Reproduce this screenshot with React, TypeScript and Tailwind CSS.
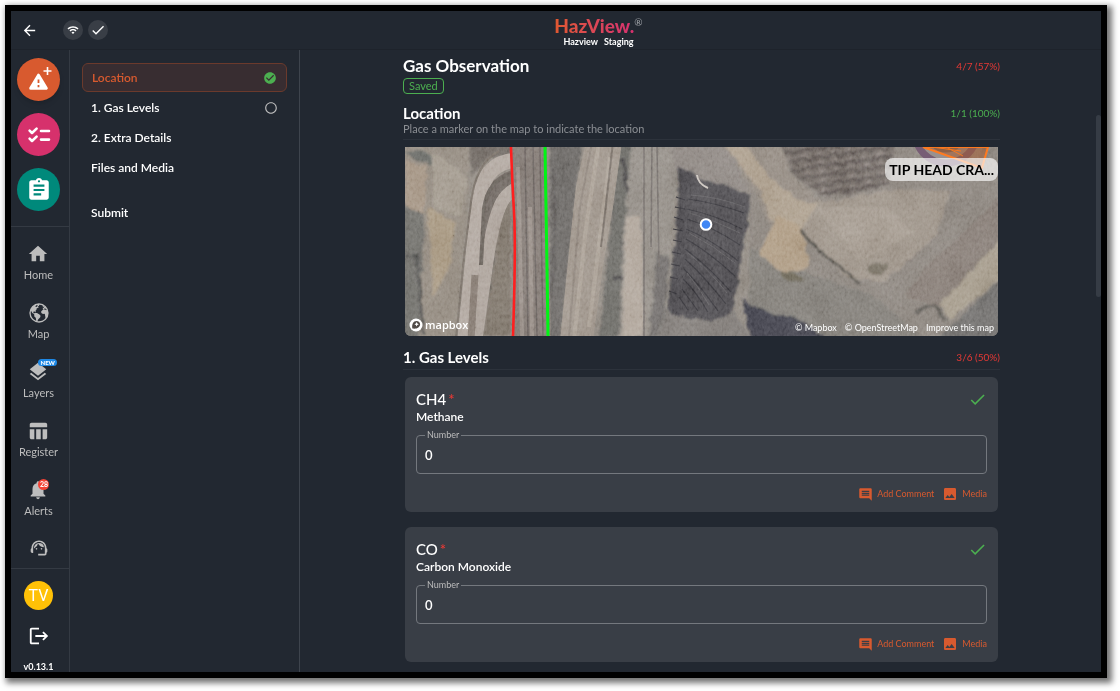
import React from 'react';
import { IoEarth } from 'react-icons/io5';
import {
  MdArrowBack,
  MdAssignment,
  MdCheck,
  MdCheckCircle,
  MdComment,
  MdHome,
  MdImage,
  MdLayers,
  MdLogout,
  MdNotifications,
  MdRadioButtonUnchecked,
  MdSupportAgent,
  MdTableChart,
  MdWifi,
} from 'react-icons/md';

const navItems = [
  { label: 'Home', icon: MdHome },
  { label: 'Map', icon: IoEarth },
  { label: 'Layers', icon: MdLayers, badge: 'NEW' },
  { label: 'Register', icon: MdTableChart },
  { label: 'Alerts', icon: MdNotifications, count: 28 },
];

const gases = [
  { id: 'ch4', symbol: 'CH4', name: 'Methane' },
  { id: 'co', symbol: 'CO', name: 'Carbon Monoxide' },
];

const HazardIcon: React.FC = () => (
  <svg viewBox="0 0 28 28" className="h-7 w-7" fill="none">
    <path d="M13.500 9.200 21.300 22.300H5.700Z" fill="white" stroke="white" strokeWidth="3" strokeLinejoin="round" />
    <path d="M13.500 13.500v3.500M13.500 19v2.200" stroke="#d85a2f" strokeWidth="1.800" />
    <path d="M22.500 1v8M18.500 5h8" stroke="white" strokeWidth="1.600" />
  </svg>
);

const ChecksIcon: React.FC = () => (
  <svg viewBox="0 0 28 28" className="h-7 w-7" fill="none" stroke="white" strokeWidth="2.600" strokeLinecap="round" strokeLinejoin="round">
    <path d="m4.600 9.600 2.400 2.400L11.600 7.600M4.600 17.600l2.400 2.400 4.600-4.400" />
    <path d="M16 10h8M16 18.600h8" />
  </svg>
);

const Header: React.FC = () => (
  <header className="flex h-[39px] items-center border-b border-[#1e232b]">
    <div className="flex w-[100px] shrink-0 items-center gap-[5px] pl-2.5">
      <button aria-label="Back" className="mr-5 text-white">
        <MdArrowBack className="h-[17px] w-[17px]" />
      </button>
      <span className="flex h-5 w-5 shrink-0 items-center justify-center rounded-full bg-[#393e46] text-white">
        <MdWifi className="h-3 w-3" />
      </span>
      <span className="flex h-5 w-5 shrink-0 items-center justify-center rounded-full bg-[#393e46] text-white">
        <MdCheck className="h-4 w-4" />
      </span>
    </div>
    <div className="flex flex-1 flex-col items-center pt-1 pr-[15px]">
      <div className="flex items-start">
        <span className="bg-gradient-to-r from-[#e0582f] to-[#d6306f] bg-clip-text text-[19px] leading-5 font-black text-transparent">HazView.</span>
        <span className="text-[10px] leading-3 text-[#a0a3a8]">®</span>
      </div>
      <span className="flex gap-1.5 text-[9px] leading-3 font-bold text-white">
        <span>Hazview</span>
        <span>Staging</span>
      </span>
    </div>
  </header>
);

const Sidebar: React.FC = () => (
  <aside className="flex w-[59px] shrink-0 flex-col border-r border-[#343a43]">
    <div className="flex flex-col items-center gap-3 border-b border-[#343a43] pt-2 pr-[3px] pb-[15px]">
      <button aria-label="New hazard" className="flex h-[43px] w-[43px] items-center justify-center rounded-full bg-[#d85a2f] shadow-md">
        <HazardIcon />
      </button>
      <button aria-label="Tasks" className="flex h-[43px] w-[43px] items-center justify-center rounded-full bg-[#d6316c]">
        <ChecksIcon />
      </button>
      <button aria-label="Forms" className="flex h-[43px] w-[43px] items-center justify-center rounded-full bg-[#00897b] text-white">
        <MdAssignment className="h-[26px] w-[26px]" />
      </button>
    </div>
    <nav className="flex flex-col items-center pt-4 pr-[3px]">
      {navItems.map(({ label, icon: Icon, badge, count }) => (
        <a key={label} href="#" className="relative flex h-[59px] flex-col items-center gap-1 text-[#bdbdbd]">
          <Icon className="h-[22px] w-[22px]" />
          <span className="text-[11px] leading-3">{label}</span>
          {badge && (
            <span className="absolute top-[-2px] left-1/2 rounded-full bg-[#1e88e5] px-0.5 text-[6px] leading-[7px] font-black text-white">{badge}</span>
          )}
          {count && (
            <span className="absolute top-0 left-1/2 flex h-[11px] w-[11px] items-center justify-center rounded-full bg-[#f44336] text-[7px] font-bold text-white">{count}</span>
          )}
        </a>
      ))}
      <a href="#" aria-label="Support" className="text-[#bdbdbd]">
        <MdSupportAgent className="h-5 w-5" />
      </a>
    </nav>
    <div className="mt-auto flex flex-col items-center border-t border-[#343a43] pt-3 pr-[3px]">
      <span className="flex h-[29px] w-[29px] items-center justify-center rounded-full bg-[#ffc107] font-['Roboto',sans-serif] text-base text-white">TV</span>
      <button aria-label="Log out" className="mt-[15px] text-white">
        <MdLogout className="h-[22px] w-[22px]" />
      </button>
      <span className="mt-3.5 text-[9px] leading-[11px] font-bold text-white">v0.13.1</span>
    </div>
  </aside>
);

const Sections: React.FC = () => (
  <nav className="w-[230px] shrink-0 border-r border-[#3e444d] px-3 pt-[13px] text-xs font-semibold text-white">
    <a href="#location" className="flex h-[29px] items-center justify-between rounded-md border border-[#6b3a2c] bg-[#382d31] px-[9px] text-[#d85a2f]">
      Location
      <MdCheckCircle className="h-3.5 w-3.5 text-[#4caf50]" />
    </a>
    <a href="#levels" className="mt-px flex h-[30px] items-center justify-between px-[9px]">
      1. Gas Levels
      <MdRadioButtonUnchecked className="h-3.5 w-3.5 text-[#bdbdbd]" />
    </a>
    <a href="#" className="flex h-[30px] items-center px-[9px]">2. Extra Details</a>
    <a href="#" className="flex h-[30px] items-center px-[9px]">Files and Media</a>
    <a href="#" className="mt-[15px] flex h-[30px] items-center px-[9px]">Submit</a>
  </nav>
);

const Satellite: React.FC = () => (
  <svg viewBox="0 0 593 189" preserveAspectRatio="xMidYMid slice" className="block h-full w-full">
    <defs>
      <filter id="rough" x="-5%" y="-5%" width="110%" height="110%">
        <feTurbulence type="fractalNoise" baseFrequency="0.12" numOctaves="3" seed="4" result="n" />
        <feDisplacementMap in="SourceGraphic" in2="n" scale="6" xChannelSelector="R" yChannelSelector="G" />
        <feGaussianBlur stdDeviation="0.9" />
      </filter>
      <filter id="soft" x="-5%" y="-5%" width="110%" height="110%">
        <feGaussianBlur stdDeviation="0.7" />
      </filter>
      <filter id="grain" x="0" y="0" width="100%" height="100%">
        <feTurbulence type="fractalNoise" baseFrequency="0.4 0.25" numOctaves="3" seed="11" />
        <feColorMatrix values="0.9 0.4 0 0 -0.15  0.9 0.4 0 0 -0.15  0.9 0.4 0 0 -0.15  0 0 0 0 1" />
      </filter>
      <filter id="patches" x="0" y="0" width="100%" height="100%">
        <feTurbulence type="fractalNoise" baseFrequency="0.035 0.025" numOctaves="5" seed="7" />
        <feColorMatrix values="1.4 0 0 0 -0.2  1.4 0 0 0 -0.2  1.4 0 0 0 -0.2  0 0 0 0 1" />
      </filter>
      <pattern id="ridges" width="15" height="9" patternUnits="userSpaceOnUse" patternTransform="rotate(-8)">
        <path d="M0 6q4-5 7-1t8-2" stroke="#4c4543" strokeWidth="2.400" fill="none" />
        <path d="M1 2q3-2 6 0" stroke="#a0958f" strokeWidth="1.400" fill="none" />
      </pattern>
    </defs>

    <rect width="593" height="189" fill="#8d867e" />
    <g filter="url(#rough)">
      <path d="M-5-5h70l-3 70-12 130H-5Z" fill="#8e857a" />
      <path d="M28 5 62 30 56 70 28 62Z" fill="#9d9488" />
      <path d="M0 14l22 5-2 46-14 5-6-5Z" fill="#a0907f" />
      <path d="M0 5q14-4 28 4v9L10 13Z" fill="#62635e" />
      <path d="M-5 55 20 68l-2 38-4 88H-5Z" fill="#696763" />
      <path d="M23 60 50 75 45 120 28 150Z" fill="#a3937c" />
      <path d="M0 109h12L15 140 18 189" stroke="#474645" strokeWidth="2.500" fill="none" />
      <path d="M64-5h44v15L84 10 66 28Z" fill="#6a635d" />
      <path d="M78 189 90 110 96 60 106 45V189Z" fill="#7a7166" />
      <path d="M90 82 85 130 80 160" stroke="#504b47" strokeWidth="3" fill="none" />
      <path d="M144-5h34l-8 55-5 60-10 84h-11Z" fill="#686562" />
      <path d="M148 20 150 80 147 150" stroke="#4f4b4a" strokeWidth="2" fill="none" />
      <path d="M212-5h16l-4 70-7 125h-23l10-95Z" fill="#666560" />
      <path d="M226-5h50l-10 90-4 110h-48l4-100Z" fill="#8f8982" />
      <path d="M221 70h15l3 119h-22Z" fill="#aca196" />
      <path d="M252 105 265 112 258 189H244Z" fill="#6e6b67" />
      <path d="M218 10l4 36M208 131h10" stroke="#3c3a3c" strokeWidth="3" />
      <path d="M264-5h60l20 50-68-10Z" fill="#8a837e" />
      <path d="M262 160 330 165 348 194H250Z" fill="#7b7773" />
    </g>

    {/* haul roads */}
    <g fill="none" strokeLinecap="butt" filter="url(#soft)">
      <path d="M77 110 82 65Q86 38 108 30" stroke="#6b625c" strokeWidth="14" />
      <path d="M60 192 68 110Q72 65 76 45 82 15 112 13" stroke="#ada39b" strokeWidth="15" />
      <path d="M71 192 82 115Q88 72 97 55 102 46 112 41" stroke="#a99f97" strokeWidth="13" />
      <path d="M76 118 79 62Q83 32 108 27" stroke="#635b55" strokeWidth="4" />
      <path d="M66 192 70 128" stroke="#82776e" strokeWidth="7" />
      <path d="M51 192 59 110 66 55Q71 16 94 4" stroke="#756c63" strokeWidth="2" />
    </g>
    <path d="M106 0h36l4 189h-38Z" fill="#7e756f" />
    <g fill="none" filter="url(#soft)">
      <path d="M120 0 123 189M128 0l4 189M135 0l3 189" stroke="#645c59" strokeWidth="1.500" />
      <path d="M113 20 117 189M125 60l2 129" stroke="#948a83" strokeWidth="4" />
    </g>
    <g filter="url(#soft)">
      <path d="M181-5h36L208 60 198 120 188 194h-33l9-90 7-65Z" fill="#9a9086" />
      <path d="M194-5 181 80 169 194M205 10 195 90 184 180" stroke="#a79d92" strokeWidth="4" fill="none" />
      <path d="M208-5 199 75 196 100" stroke="#766d65" strokeWidth="2" fill="none" />
      <path d="M187-5 175 60 164 189" stroke="#8c8279" strokeWidth="2" fill="none" />
      <path d="M239 0v189M252 0l2 120M247 0l-1 100" stroke="#706a66" strokeWidth="1.600" fill="none" />
    </g>

    {/* right side ground */}
    <g filter="url(#rough)">
      <path d="M345-5H598v200H345Z" fill="#878079" />
      <path d="M345 100 400 125 470 150 520 194H345Z" fill="#7d7973" />
      <path d="M375 40 420 55 495 42 545 45 530 90 480 135 440 130 395 80Z" fill="#998f84" />
      <path d="M410 60 480 60 510 85 455 115Z" fill="#a1978c" />
      <path d="M314-5h62l8 30 30 28-20 35-30-10-12-30-22-35Z" fill="#8f867d" />
      <path d="M318-5h20l28 36 26 22 20 4-16 26-30-10-12-30Z" fill="#a89a88" />
      <path d="M354 108 364 85 374 68 396 80 404 110 400 123 378 126Z" fill="#ab9880" />
      <path d="M374-5H490l-6 42-28 9-38 3-28-20Z" fill="#6f6762" />
      <path d="M374-5H490l-6 42-28 9-38 3-28-20Z" fill="url(#ridges)" opacity=".8" />
      <path d="M396 82Q406 97 420 108 438 122 454 137" stroke="#4b4842" strokeWidth="3" fill="none" />
      <path d="M337 152 360 165 395 172 425 194H346Z" fill="#3e3e46" />
      <path d="M374 128q8-6 18 0l10 5-18 2Z" fill="#686252" />
      <path d="M463 118l20-3-5 12-12 1Z" fill="#736c5f" />
      <path d="M520 120 560 85 598 45V100L535 160 500 150Z" fill="#81776f" />
      <path d="M534 158 565 125 598 90V130L545 172Z" fill="#a29888" />
      <path d="M553 172 598 130V194H530Z" fill="#6c6a67" />
      <path d="M512 165l17-7 12 16" stroke="#5c5852" strokeWidth="4" fill="none" />
    </g>

    {/* dark tip */}
    <path d="M273 20l14 6 12 8 26 6 21 8-3 25-6 35-6 38-5 20-19 8-40-6-4-6 5-55 5-45Z" fill="#48474b" filter="url(#rough)" />
    <g stroke="#333237" strokeWidth="1.200" fill="none">
      <path d="M283 52q28 4 56 14M282 62q28 6 55 20M282 72q26 8 53 26M281 82q25 10 52 32M281 92q23 13 49 37M280 102q22 16 46 43M280 112q18 16 41 45M279 122q15 15 34 42M278 132q12 11 25 33M277 142l16 22M274 150l9 13" />
      <path d="M271 50l9 3M270 60l10 2M269 70l9 3M268 82l10 2M268 93l9 2M267 105l9 2M266 117l9 2M265 130l8 2M264 144l8 3" />
    </g>
    <path d="M286 48q28 2 54 12M285 66q26 8 50 20M284 86q24 12 46 30M283 106q20 16 39 40M282 126q12 14 22 32" stroke="#5b595c" strokeWidth="1" fill="none" />
    <path d="M292 28q1 9 11 13" stroke="#c9c2bc" strokeWidth="2" fill="none" />

    <rect width="593" height="189" filter="url(#patches)" opacity=".2" className="mix-blend-soft-light" />
    <rect width="593" height="189" filter="url(#grain)" opacity=".4" className="mix-blend-soft-light" />

    {/* hazard zone and boundary lines */}
    <circle cx="541" cy="-15" r="31" fill="#75665e" stroke="#775d75" strokeWidth="7" />
    <circle cx="541" cy="-15" r="24" fill="none" stroke="#999190" strokeWidth="7" />
    <path d="M518 0 577 21 583 0Z" fill="#a75a2b" fillOpacity=".5" stroke="#ff7a1f" strokeWidth="2" />
    <path d="M527 0l29 4M541 0l17 9" stroke="#f57820" strokeWidth="1" />
    <path d="M106 0Q107 30 109 65T108 189" fill="none" stroke="#ff1f1f" strokeWidth="2.600" />
    <path d="M140 0 142 120 143 189" fill="none" stroke="#00f514" strokeWidth="3" />
    <circle cx="301" cy="77.500" r="5.300" fill="#4086f4" stroke="white" strokeWidth="2" />
  </svg>
);

const MapView: React.FC = () => (
  <div className="relative mx-0.5 h-[189px] overflow-hidden rounded-b-md">
    <Satellite />
    <span className="absolute top-[11px] right-0 rounded-lg bg-white/65 px-1 text-sm leading-[23px] font-bold text-black">TIP HEAD CRA...</span>
    <span className="absolute bottom-1 left-1 flex items-center gap-0.5 font-['Open_Sans',sans-serif] text-[11px] leading-3 font-semibold text-white">
      <svg viewBox="0 0 14 14" className="h-3.5 w-3.5">
        <circle cx="7" cy="7" r="6.500" fill="white" />
        <path d="M3.400 10.600C2.500 6.500 4.200 3 7.600 3c2 0 3.500 1.400 3.500 3.300 0 3.200-3.500 5-7.700 4.300Z" fill="#514b47" />
        <path d="m7.600 4.100.7 1.500 1.500.7-1.500.7-.7 1.500-.7-1.500-1.500-.7 1.500-.7Z" fill="white" />
      </svg>
      mapbox
    </span>
    <span className="absolute right-1 bottom-0.5 flex gap-2 text-[9px] leading-3 text-white">
      <a href="#">© Mapbox</a>
      <a href="#">© OpenStreetMap</a>
      <a href="#">Improve this map</a>
    </span>
  </div>
);

const GasCard: React.FC<{ gas: (typeof gases)[number] }> = ({ gas }) => (
  <section className="mx-0.5 rounded-md bg-[#393e46] px-[11px] pt-3 pb-2.5">
    <div className="flex items-center justify-between">
      <h3 className="text-[15px] leading-5 font-medium text-white">
        {gas.symbol}
        <span className="ml-0.5 text-[#e53935]">*</span>
      </h3>
      <MdCheck className="h-[19px] w-[19px] text-[#4caf50]" />
    </div>
    <p className="text-xs leading-4 font-semibold text-white">{gas.name}</p>
    <fieldset className="mt-1 rounded border border-[#74787e] px-2">
      <legend className="px-0.5 text-[9px] leading-3 text-[#bdbdbd]">
        <label htmlFor={gas.id}>Number</label>
      </legend>
      <input id={gas.id} defaultValue="0" className="block h-8 w-full bg-transparent pb-1 text-[13px] font-semibold text-white outline-none" />
    </fieldset>
    <div className="mt-3 flex h-4 items-center justify-end gap-2 text-[9px] text-[#d85a2f]">
      <button className="flex items-center gap-1">
        <MdComment className="h-[15px] w-[15px]" />
        Add Comment
      </button>
      <button className="flex items-center gap-1">
        <MdImage className="h-4 w-4" />
        Media
      </button>
    </div>
  </section>
);

export default function App() {
  return (
    <div className="flex min-h-screen bg-white pt-[5px] pr-[13px] pb-[13px] pl-[5px] font-['Lato',sans-serif]">
      <div className="flex flex-1 flex-col border-6 border-black bg-[#222831] shadow-[3px_3px_6px_2px_rgba(0,0,0,0.55)]">
        <Header />
        <div className="flex flex-1">
          <Sidebar />
          <Sections />
          <main className="flex flex-1 pl-[7px]">
            <div className="mx-auto w-full max-w-[597px] pt-1.5">
              <div className="flex items-center justify-between">
                <h1 className="text-[17px] leading-5 font-bold text-white">Gas Observation</h1>
                <span className="text-[10px] text-[#e53935]">4/7 (57%)</span>
              </div>
              <div className="mt-0.5 flex">
                <span className="rounded-sm border border-[#4caf50] px-[5px] text-[11px] leading-3.5 text-[#4caf50]">Saved</span>
              </div>
              <div id="location" className="mt-[9px] flex items-center justify-between">
                <h2 className="text-[15px] leading-5 font-bold text-white">Location</h2>
                <span className="text-[10px] text-[#4caf50]">1/1 (100%)</span>
              </div>
              <p className="border-b border-[#2c323b] pb-1 text-[11px] leading-3 text-[#8b8e93]">Place a marker on the map to indicate the location</p>
              <div className="pt-[7px]">
                <MapView />
              </div>
              <div id="levels" className="mt-[11px] mb-[7px] flex items-center justify-between border-b border-[#2c323b] pb-0.5">
                <h2 className="text-[15px] leading-5 font-bold text-white">1. Gas Levels</h2>
                <span className="text-[10px] text-[#e53935]">3/6 (50%)</span>
              </div>
              <div className="flex flex-col gap-[15px]">
                {gases.map((gas) => (
                  <GasCard key={gas.id} gas={gas} />
                ))}
              </div>
            </div>
            <div className="mt-[65px] h-[182px] w-[5px] rounded-full bg-[#363c45]" />
          </main>
        </div>
      </div>
    </div>
  );
}
